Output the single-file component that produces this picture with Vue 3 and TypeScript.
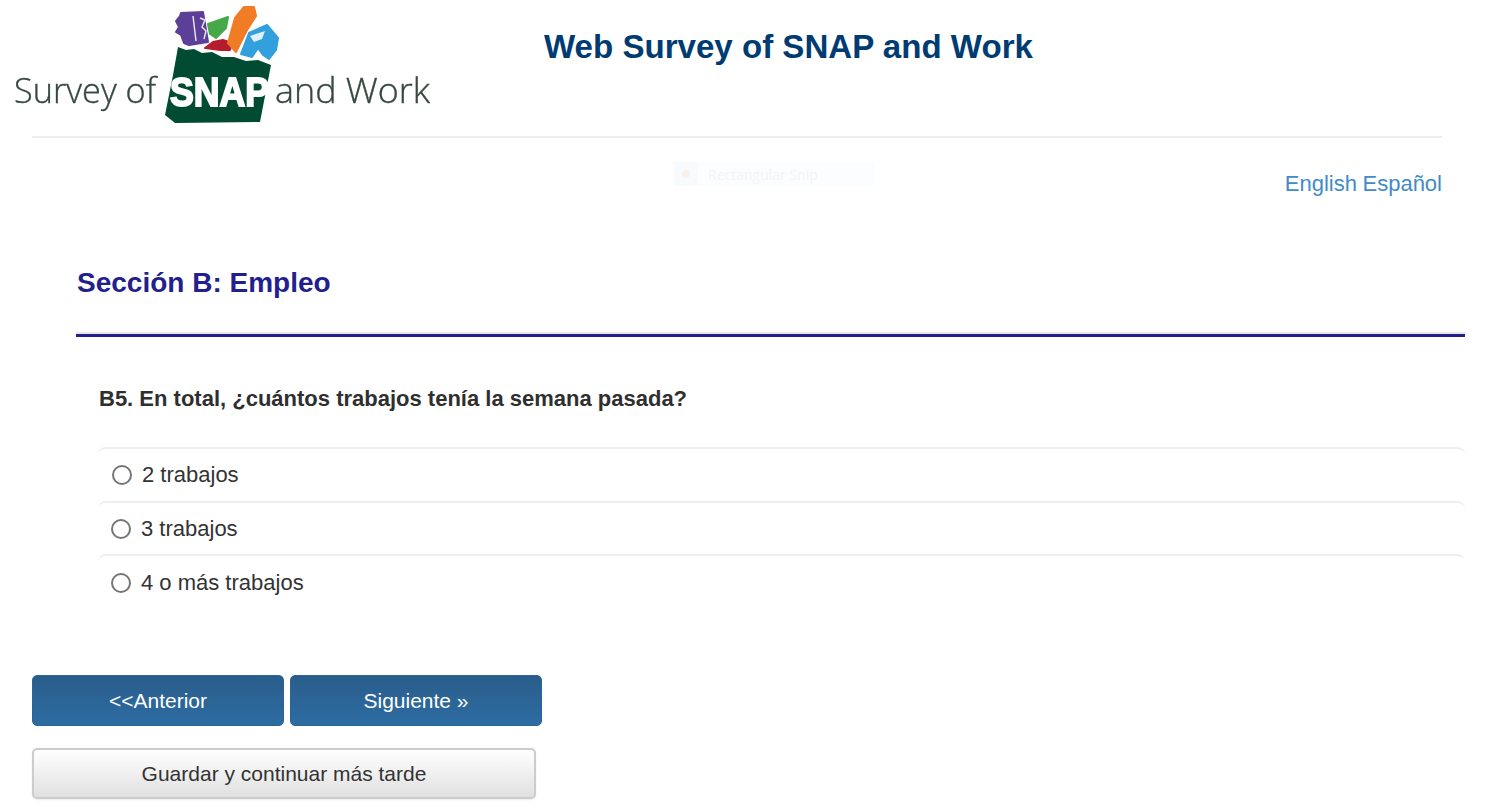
<script setup lang="ts">
interface Option {
  id: string
  label: string
  indent: number
}

const options: Option[] = [
  { id: 'b5-2', label: '2 trabajos', indent: 14 },
  { id: 'b5-3', label: '3 trabajos', indent: 13 },
  { id: 'b5-4', label: '4 o más trabajos', indent: 13 },
]
</script>

<template>
  <div class="page">
    <header class="top">
      <svg class="logo" viewBox="0 0 436 126" width="436" height="126" role="img" aria-label="Survey of SNAP and Work">
        <defs>
          <filter id="soft" x="-5%" y="-5%" width="110%" height="110%">
            <feGaussianBlur stdDeviation="0.6" />
          </filter>
        </defs>
        <g filter="url(#soft)">
          <g class="blob">
            <path d="M181 13 L203 12 L208 42 L189 45 L184 43 L181 35 L176 32 L179 27 L176 21 L180 16 Z" fill="#5b3f98" stroke="#5b3f98" />
            <path d="M208 24 L228 17 L226 28 L216 38 L210 34 Z" fill="#46a84a" stroke="#46a84a" />
            <path d="M205 48 L213 42 L223 40 L232 43 L230 50 L220 50 L213 49 Z" fill="#b71f2d" stroke="#b71f2d" />
            <path d="M228 43 L235 18 L244 7 L254 7 L256 16 L247 30 L236 52 Z" fill="#f07b25" stroke="#f07b25" />
            <path d="M241 54 L249 33 L267 25 L278 38 L276 50 L269 59 L263 55 L258 48 L252 57 Z" fill="#33a0dc" stroke="#33a0dc" />
          </g>
          <path d="M193 16 L196 41 M200 18 L205 20 L202 27 L206 31 L204 39" stroke="#e6e1f2" stroke-width="1.5" fill="none" />
          <path d="M250 36 L265 31 L262 39 L254 42 Z" fill="#dff1fb" />
          <path d="M178 47 L186 50 L194 49 L202 53 L212 52 L222 57 L234 57 L246 61 L258 60 L271 65 L260 122 L175 123 L165 115 L173 75 Z" fill="#004b33" />
          <text x="170" y="106" class="snap" textLength="99" lengthAdjust="spacingAndGlyphs">SNAP</text>
          <text x="14" y="103" class="word" textLength="142" lengthAdjust="spacingAndGlyphs">Survey of</text>
          <text x="275" y="103" class="word" textLength="155" lengthAdjust="spacingAndGlyphs">and Work</text>
        </g>
      </svg>
      <h1 class="title">Web Survey of SNAP and Work</h1>
    </header>

    <main class="body">
      <nav class="langs">
        <a href="#">English</a>
        <a href="#">Español</a>
      </nav>

      <section class="section">
        <h2 class="section-title">Sección B: Empleo</h2>
        <hr class="rule" />

        <div class="question">
          <p class="question-text">B5. En total, ¿cuántos trabajos tenía la semana pasada?</p>
          <label
            v-for="opt in options"
            :key="opt.id"
            class="option"
            :style="{ paddingLeft: `${opt.indent}px` }"
          >
            <input type="radio" name="b5" :value="opt.id" />
            <span>{{ opt.label }}</span>
          </label>
        </div>
      </section>

      <div class="nav-buttons">
        <button class="btn btn-primary" type="button">&lt;&lt;Anterior</button>
        <button class="btn btn-primary" type="button">Siguiente »</button>
      </div>
      <button class="btn btn-save" type="button">Guardar y continuar más tarde</button>
    </main>

    <!-- faint leftover of a snipping tool in the captured page -->
    <div class="snip">
      <span class="snip-icon"><i></i></span>
      <span class="snip-label">Rectangular Snip</span>
    </div>
  </div>
</template>

<style>
html,
body {
  background: #fff;
}
</style>

<style scoped>
.page {
  position: relative;
  width: 1510px;
  height: 810px;
  overflow: hidden;
  font-family: 'Liberation Sans', Arial, sans-serif;
  color: #333;
  background: #fff;
}

.top {
  display: flex;
  height: 136px;
}

.logo {
  flex: none;
  display: block;
}

.blob path {
  stroke-width: 2px;
  stroke-linejoin: round;
}

.word {
  font-family: 'Open Sans', 'Liberation Sans', sans-serif;
  font-size: 34px;
  font-weight: 300;
  fill: #35483f;
  stroke: #35483f;
  stroke-width: 0.35px;
}

.snap {
  font-family: 'Liberation Sans', Arial, sans-serif;
  font-size: 41px;
  font-weight: 700;
  fill: #fff;
  stroke: #fff;
  stroke-width: 2px;
}

.title {
  margin: 27px 0 0 108px;
  font-size: 33.1px;
  line-height: 40px;
  font-weight: 700;
  color: #003b71;
}

.body {
  margin: 0 68px 0 32px;
  padding-top: 34px;
  border-top: 2px solid #eee;
}

.langs {
  display: flex;
  justify-content: flex-end;
  gap: 5.5px;
  font-size: 22px;
  line-height: 26px;
  margin-top: -1px;
}

.langs a {
  color: #428bca;
  text-decoration: none;
}

.section {
  margin: 0 -23px 0 44px;
}

.section-title {
  margin: 70px 0 0 1px;
  padding-bottom: 33px;
  font-size: 28px;
  line-height: 32px;
  font-weight: 700;
  color: #231f8c;
}

.rule {
  margin: 0;
  height: 0;
  border: 0;
  border-top: 2px solid #e8e8e8;
  border-bottom: 3px solid #231f8c;
}

.question {
  padding: 49px 0 0 22px;
}

.question-text {
  margin: 0 0 35px 1px;
  font-size: 22px;
  line-height: 26px;
  font-weight: 700;
  color: #2f2f2f;
}

.option {
  display: flex;
  align-items: center;
  gap: 10px;
  height: 52px;
  border-top: 2px solid #eee;
  border-radius: 8px 8px 0 0;
  font-size: 22px;
  color: #333;
}

.option:nth-of-type(2) {
  height: 51px;
}

.option:last-child {
  height: 53px;
}

.option input {
  appearance: none;
  flex: none;
  width: 20px;
  height: 20px;
  margin: 0;
  border: 2px solid #767676;
  border-radius: 50%;
  background: #fff;
}

.nav-buttons {
  display: flex;
  gap: 6px;
  margin-top: 66px;
}

.btn {
  display: block;
  height: 51px;
  padding: 0;
  font-family: inherit;
  font-size: 21px;
  border-radius: 5px;
  cursor: pointer;
}

.btn-primary {
  width: 252px;
  color: #fff;
  border: 1px solid #2b6496;
  background: linear-gradient(#2a5d8b, #2d6ca2);
}

.btn-save {
  width: 504px;
  margin-top: 22px;
  color: #333;
  border: 2px solid #ccc;
  background: linear-gradient(#fff, #e0e0e0);
  box-shadow: 0 1px 2px rgba(0, 0, 0, 0.08);
}

.snip {
  position: absolute;
  left: 674px;
  top: 162px;
  width: 201px;
  height: 24px;
  display: flex;
  align-items: center;
  background: #fcfdfe;
}

.snip-icon {
  width: 24px;
  height: 24px;
  display: flex;
  align-items: center;
  justify-content: center;
  background: #f7fbfe;
}

.snip-icon i {
  width: 8px;
  height: 8px;
  border-radius: 50%;
  background: #f8f1ee;
}

.snip-label {
  margin-left: 10px;
  font-size: 14px;
  font-family: 'Open Sans', sans-serif;
  color: #f4f5f6;
}
</style>
